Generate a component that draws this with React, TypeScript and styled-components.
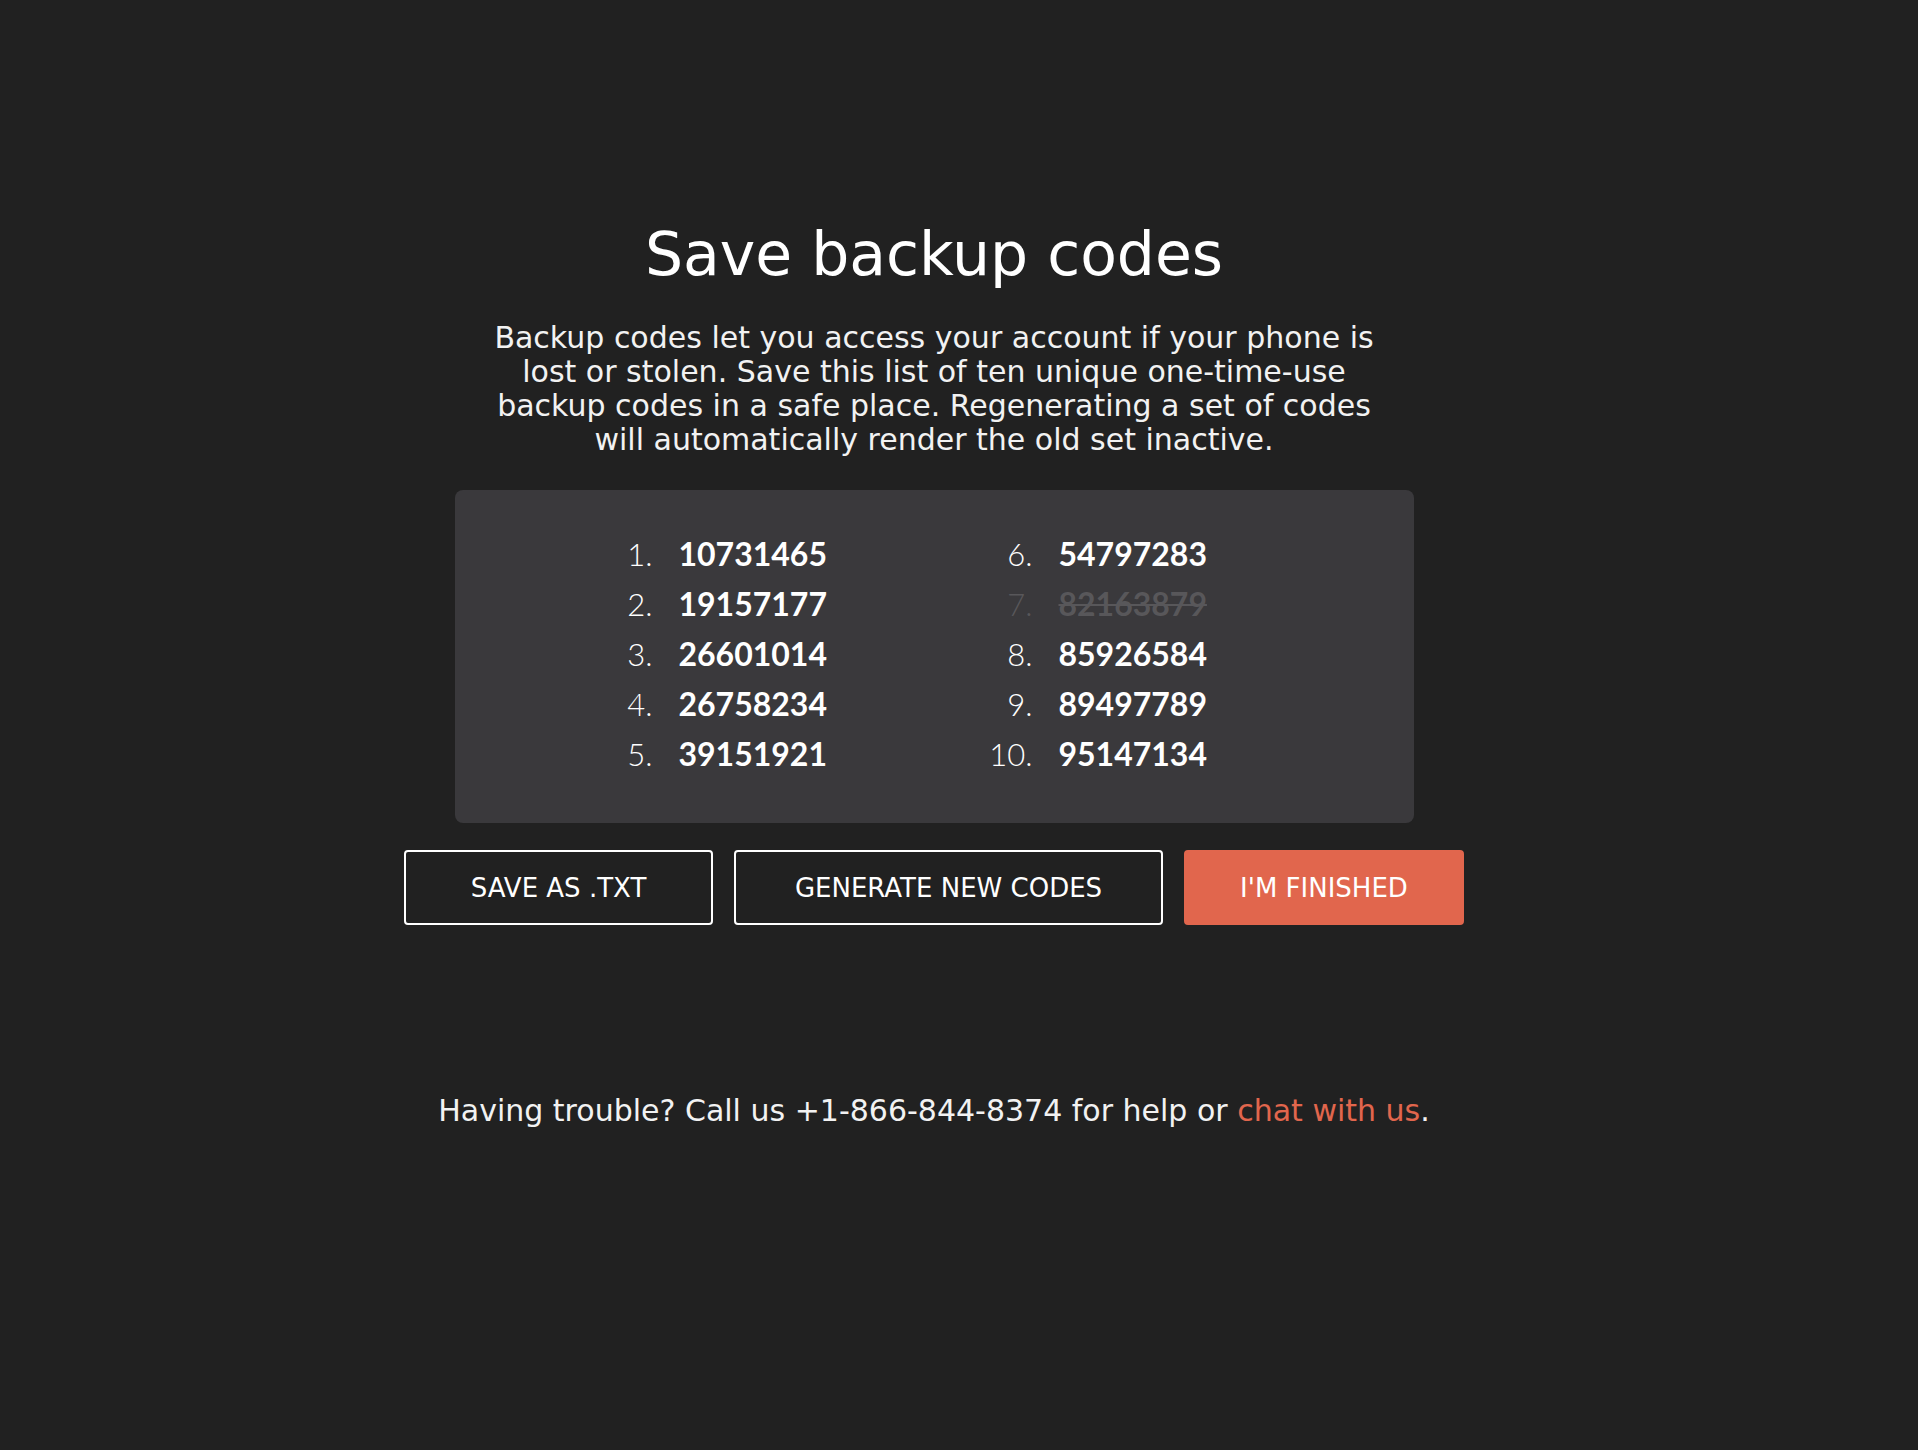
import React from "react";
import styled, { createGlobalStyle } from "styled-components";

const GlobalStyle = createGlobalStyle`
  html, body {
    margin: 0;
    padding: 0;
    background: #212121;
    min-height: 100%;
  }
  body {
    font-family: "DejaVu Sans", "Liberation Sans", sans-serif;
    color: #ffffff;
  }
`;

const Page = styled.main`
  min-height: 1450px;
  box-sizing: border-box;
  padding: 218px 50px 0 0;
  display: flex;
  flex-direction: column;
  align-items: center;
  background: #212121;
`;

const Title = styled.h1`
  margin: 0;
  font-family: "DejaVu Sans", sans-serif;
  font-weight: 400;
  font-size: 60px;
  line-height: 72px;
  color: #ffffff;
`;

const Intro = styled.p`
  margin: 31px 0 0;
  width: 900px;
  text-align: center;
  font-size: 30px;
  line-height: 34px;
  color: #f2f2f2;
`;

const CodesCard = styled.section`
  margin-top: 33px;
  width: 959px;
  height: 333px;
  box-sizing: border-box;
  padding: 39px 0 0 142px;
  background: #3a393c;
  border-radius: 8px;
  display: flex;
`;

const CodeColumn = styled.ol`
  list-style: none;
  margin: 0;
  padding: 0;
  width: 380px;
  display: flex;
  flex-direction: column;
`;

const CodeRow = styled.li<{ $used?: boolean }>`
  display: grid;
  grid-template-columns: 56px 1fr;
  column-gap: 26px;
  height: 50px;
  line-height: 50px;
  font-family: Lato, "Open Sans", sans-serif;
  font-size: 32px;
  color: ${(p) => (p.$used ? "#58575a" : "#ffffff")};
`;

const CodeIndex = styled.span`
  text-align: right;
  font-weight: 300;
  font-size: 31px;
`;

const CodeValue = styled.span<{ $used?: boolean }>`
  font-weight: 700;
  text-decoration: ${(p) => (p.$used ? "line-through" : "none")};
  text-decoration-thickness: 2px;
`;

const Actions = styled.div`
  margin-top: 27px;
  display: flex;
  gap: 21px;
`;

const ActionButton = styled.button<{ $primary?: boolean; $width: number }>`
  width: ${(p) => p.$width}px;
  height: 75px;
  box-sizing: border-box;
  border-radius: 4px;
  border: 2px solid ${(p) => (p.$primary ? "#e1664d" : "#ffffff")};
  background: ${(p) => (p.$primary ? "#e1664d" : "#212121")};
  color: #ffffff;
  font-family: "DejaVu Sans", sans-serif;
  font-size: 26px;
  text-transform: uppercase;
  display: flex;
  align-items: center;
  justify-content: center;
  padding: 0;
  cursor: pointer;
`;

const Footer = styled.p`
  margin: 169px 0 0;
  font-size: 30px;
  line-height: 34px;
  color: #f2f2f2;
`;

const Link = styled.a`
  color: #e1664d;
  text-decoration: none;
`;

const left = [
  { n: 1, code: "10731465" },
  { n: 2, code: "19157177" },
  { n: 3, code: "26601014" },
  { n: 4, code: "26758234" },
  { n: 5, code: "39151921" },
];
const right = [
  { n: 6, code: "54797283" },
  { n: 7, code: "82163879", used: true },
  { n: 8, code: "85926584" },
  { n: 9, code: "89497789" },
  { n: 10, code: "95147134" },
];

type Code = { n: number; code: string; used?: boolean };

const Column = ({ items }: { items: Code[] }) => (
  <CodeColumn>
    {items.map((c) => (
      <CodeRow key={c.n} $used={c.used}>
        <CodeIndex>{c.n}.</CodeIndex>
        <CodeValue $used={c.used}>{c.code}</CodeValue>
      </CodeRow>
    ))}
  </CodeColumn>
);

export default function App() {
  return (
    <>
      <GlobalStyle />
      <Page>
        <Title>Save backup codes</Title>
        <Intro>
          Backup codes let you access your account if your phone is lost or
          stolen. Save this list of ten unique one-time-use backup codes in a
          safe place. Regenerating a set of codes will automatically render the
          old set inactive.
        </Intro>
        <CodesCard>
          <Column items={left} />
          <Column items={right} />
        </CodesCard>
        <Actions>
          <ActionButton $width={309}>Save as .txt</ActionButton>
          <ActionButton $width={429}>Generate new codes</ActionButton>
          <ActionButton $width={280} $primary>
            I'm finished
          </ActionButton>
        </Actions>
        <Footer>
          Having trouble? Call us +1-866-844-8374 for help or{" "}
          <Link href="#">chat with us</Link>.
        </Footer>
      </Page>
    </>
  );
}
